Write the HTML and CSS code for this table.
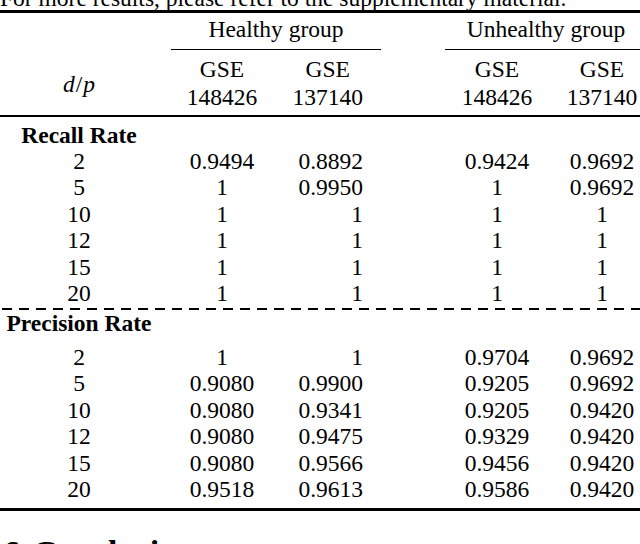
FILE: index.html
```html
<!DOCTYPE html>
<html>
<head>
<meta charset="utf-8">
<link rel="stylesheet" href="styles.css">
</head>
<body>
<p class="lead">For more results, please refer to the supplementary material.</p>
<table class="res">
  <colgroup>
    <col class="c-dp"><col class="c-a"><col class="c-b"><col class="c-gap"><col class="c-c"><col class="c-d">
  </colgroup>
  <thead>
    <tr class="grp">
      <th></th>
      <th colspan="2"><div class="cmid cmid-h">Healthy group</div></th>
      <th></th>
      <th colspan="2"><div class="cmid cmid-u">Unhealthy group</div></th>
    </tr>
    <tr class="ds">
      <th class="dp"><i>d</i><span class="slash">/</span><i>p</i></th>
      <th class="ctr">GSE<br>148426</th>
      <th class="rgt"><span class="stack">GSE<br>137140</span></th>
      <th></th>
      <th class="ctr">GSE<br>148426</th>
      <th class="ctr">GSE<br>137140</th>
    </tr>
  </thead>
  <tbody>
    <tr class="sec sec-recall"><td class="secname">Recall Rate</td><td colspan="5"></td></tr>
    <tr><td>2</td><td>0.9494</td><td class="rgt">0.8892</td><td></td><td>0.9424</td><td>0.9692</td></tr>
    <tr><td>5</td><td>1</td><td class="rgt">0.9950</td><td></td><td>1</td><td>0.9692</td></tr>
    <tr><td>10</td><td>1</td><td class="rgt">1</td><td></td><td>1</td><td>1</td></tr>
    <tr><td>12</td><td>1</td><td class="rgt">1</td><td></td><td>1</td><td>1</td></tr>
    <tr><td>15</td><td>1</td><td class="rgt">1</td><td></td><td>1</td><td>1</td></tr>
    <tr><td>20</td><td>1</td><td class="rgt">1</td><td></td><td>1</td><td>1</td></tr>
    <tr class="dashrow"><td colspan="6"><div class="dashline"></div></td></tr>
    <tr class="sec sec-prec"><td class="secname">Precision Rate</td><td colspan="5"></td></tr>
    <tr><td>2</td><td>1</td><td class="rgt">1</td><td></td><td>0.9704</td><td>0.9692</td></tr>
    <tr><td>5</td><td>0.9080</td><td class="rgt">0.9900</td><td></td><td>0.9205</td><td>0.9692</td></tr>
    <tr><td>10</td><td>0.9080</td><td class="rgt">0.9341</td><td></td><td>0.9205</td><td>0.9420</td></tr>
    <tr><td>12</td><td>0.9080</td><td class="rgt">0.9475</td><td></td><td>0.9329</td><td>0.9420</td></tr>
    <tr><td>15</td><td>0.9080</td><td class="rgt">0.9566</td><td></td><td>0.9456</td><td>0.9420</td></tr>
    <tr class="last"><td>20</td><td>0.9518</td><td class="rgt">0.9613</td><td></td><td>0.9586</td><td>0.9420</td></tr>
  </tbody>
</table>
<h2 class="section"><span class="secnum">6</span> Conclusions</h2>
</body>
</html>
```

FILE: styles.css
```css
html, body {
  margin: 0;
  padding: 0;
  overflow: hidden;
  background: #fff;
}
body {
  width: 640px;
  height: 544px;
  font-family: "Liberation Serif", "Times New Roman", serif;
  font-size: 23.5px;
  color: #000;
}
.lead {
  margin: -15px 0 0 0;
  line-height: 26px;
  white-space: nowrap;
}
.res {
  margin-top: -1px;
  width: 655px;
  table-layout: fixed;
  border-collapse: collapse;
  border-top: 3px solid #000;
  border-bottom: 3px solid #000;
}
.c-dp { width: 158px; }
.c-a { width: 128px; }
.c-b { width: 104px; }
.c-gap { width: 55px; }
.c-c { width: 104px; }
.c-d { width: 106px; }
.res th, .res td {
  padding: 0;
  font-weight: normal;
  text-align: center;
  line-height: 26.5px;
  white-space: nowrap;
}
.grp th {
  padding-top: 3px;
  vertical-align: top;
}
.cmid {
  line-height: 26px;
  padding-bottom: 6.5px;
  border-bottom: 1.5px solid #000;
}
.cmid-h { margin: 0 9px 0 13px; }
.cmid-u { margin: 0 8px 0 0; }
.ds th {
  line-height: 28px;
  padding-top: 5px;
  padding-bottom: 4px;
  border-bottom: 2px solid #000;
  vertical-align: top;
}
.ds th.dp {
  vertical-align: middle;
  padding-top: 8px;
}
.dp i { font-style: italic; }
.dp .slash { margin: 0 1px; }
.res .rgt {
  text-align: right;
  padding-right: 27px;
}
.stack {
  display: inline-block;
  text-align: center;
}
.res .secname {
  font-weight: bold;
}
.sec-recall td {
  line-height: 26px;
  padding-top: 5px;
}
.sec-prec td {
  line-height: 26px;
  padding-bottom: 8px;
}
.dashrow td {
  line-height: 0;
  padding: 0;
}
.dashline {
  height: 2px;
  margin-top: 1px;
  margin-left: 2px;
  background: repeating-linear-gradient(to right, #000 0, #000 10px, transparent 10px, transparent 17px);
}
.last td {
  padding-bottom: 5px;
}
.section {
  margin: 25px 0 0 3px;
  font-size: 34px;
  line-height: 34px;
  font-weight: bold;
  white-space: nowrap;
}
.secnum {
  margin-right: 4px;
}
```
